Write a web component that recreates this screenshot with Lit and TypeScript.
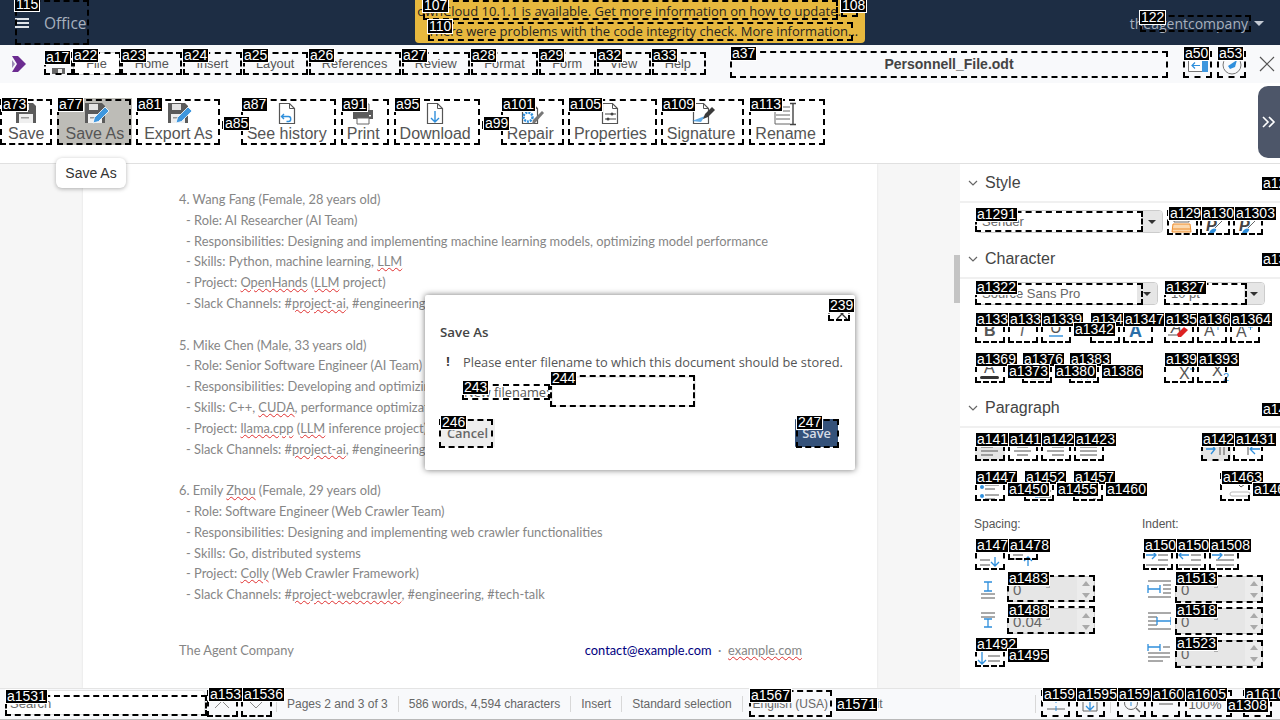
import { LitElement, html, css, svg } from 'lit'
import { customElement } from 'lit/decorators.js'

type Mark = [string, number, number, number?, number?, number?, number?]

// hint overlay: label, label x, label y, box left, top, right, bottom
const MARKS: Mark[] = [
  ['115', 15, -2, 15, 0, 89, 45],
  ['107', 423, -1, 423, 0, 838, 20],
  ['108', 841, -1, 841, 0, 858, 17],
  ['110', 428, 20, 428, 22, 853, 41],
  ['122', 1140, 11, 1140, 15, 1251, 32],
  ['a17', 45, 51, 44, 52, 73, 75],
  ['a22', 73, 49, 73, 52, 121, 75],
  ['a23', 121, 49, 121, 52, 182, 75],
  ['a24', 183, 49, 183, 52, 242, 75],
  ['a25', 243, 49, 243, 52, 308, 75],
  ['a26', 309, 49, 309, 52, 401, 75],
  ['a27', 402, 49, 402, 52, 470, 75],
  ['a28', 471, 49, 471, 52, 538, 75],
  ['a29', 539, 49, 539, 52, 596, 75],
  ['a32', 597, 49, 597, 52, 651, 75],
  ['a33', 652, 49, 652, 52, 706, 75],
  ['a37', 731, 47, 730, 51, 1168, 78],
  ['a50', 1184, 47, 1183, 51, 1212, 78],
  ['a53', 1218, 47, 1217, 51, 1246, 78],
  ['a73', 2, 98, 0, 99, 52, 145],
  ['a77', 58, 98, 57, 99, 131, 145],
  ['a81', 137, 98, 136, 99, 220, 145],
  ['a85', 224, 117, 222, 121, 224, 129],
  ['a87', 242, 98, 241, 99, 336, 145],
  ['a91', 342, 98, 341, 99, 389, 145],
  ['a95', 395, 98, 394, 99, 480, 145],
  ['a99', 484, 117, 482, 121, 484, 129],
  ['a101', 502, 98, 501, 99, 564, 145],
  ['a105', 569, 98, 568, 99, 657, 145],
  ['a109', 662, 98, 661, 99, 744, 145],
  ['a113', 750, 98, 749, 99, 825, 145],
  ['a1287', 1262, 177, 1261, 177, 1281, 190],
  ['a1291', 976, 208, 975, 211, 1143, 232],
  ['a1294', 1169, 207, 1167, 210, 1198, 235],
  ['a1300', 1202, 207, 1200, 210, 1230, 235],
  ['a1303', 1235, 207, 1233, 210, 1263, 235],
  ['a1318', 1262, 253, 1261, 253, 1281, 266],
  ['a1322', 976, 281, 975, 283, 1143, 305],
  ['a1327', 1165, 281, 1164, 283, 1247, 305],
  ['a1334', 976, 313, 975, 315, 1005, 343],
  ['a1337', 1009, 313, 1008, 315, 1038, 343],
  ['a1339', 1042, 313, 1041, 315, 1071, 343],
  ['a1344', 1091, 313, 1090, 315, 1120, 343],
  ['a1342', 1074, 323],
  ['a1347', 1124, 313, 1123, 315, 1153, 343],
  ['a1354', 1165, 313, 1164, 315, 1194, 343],
  ['a1361', 1198, 313, 1197, 315, 1227, 343],
  ['a1364', 1231, 313, 1230, 315, 1260, 343],
  ['a1369', 976, 353, 975, 355, 1005, 383],
  ['a1376', 1023, 353, 1022, 355, 1052, 383],
  ['a1373', 1008, 365],
  ['a1383', 1070, 353, 1069, 355, 1099, 383],
  ['a1380', 1055, 365],
  ['a1386', 1102, 365],
  ['a1390', 1165, 353, 1164, 355, 1194, 383],
  ['a1393', 1198, 353, 1197, 355, 1227, 383],
  ['a1408', 1262, 403, 1261, 403, 1281, 416],
  ['a1414', 976, 433, 975, 435, 1005, 461],
  ['a1417', 1009, 433, 1008, 435, 1038, 461],
  ['a1420', 1042, 433, 1041, 435, 1071, 461],
  ['a1423', 1075, 433, 1074, 435, 1104, 461],
  ['a1428', 1202, 433, 1201, 435, 1230, 461],
  ['a1431', 1235, 433, 1233, 435, 1263, 461],
  ['a1447', 976, 471, 975, 473, 1005, 501],
  ['a1452', 1025, 471, 1024, 473, 1054, 501],
  ['a1450', 1008, 483],
  ['a1457', 1074, 471, 1073, 473, 1103, 501],
  ['a1455', 1057, 483],
  ['a1460', 1106, 483],
  ['a1463', 1222, 471, 1220, 473, 1250, 501],
  ['a1466', 1253, 483],
  ['a1474', 976, 539, 975, 541, 1005, 570],
  ['a1478', 1009, 539, 1008, 541, 1038, 560],
  ['a1502', 1144, 539, 1143, 541, 1173, 570],
  ['a1505', 1177, 539, 1176, 541, 1206, 570],
  ['a1508', 1210, 539, 1209, 541, 1239, 570],
  ['a1483', 1008, 572, 1007, 575, 1095, 602],
  ['a1488', 1008, 604, 1007, 606, 1095, 634],
  ['a1492', 976, 638, 975, 640, 1005, 667],
  ['a1495', 1008, 649],
  ['a1513', 1176, 572, 1175, 575, 1263, 603],
  ['a1518', 1176, 604, 1175, 607, 1263, 635],
  ['a1523', 1176, 637, 1175, 640, 1263, 668],
  ['a1531', 6, 690, 5, 695, 207, 716],
  ['a1533', 209, 688, 207, 690, 238, 717],
  ['a1536', 243, 688, 241, 690, 272, 717],
  ['a1567', 750, 689, 749, 690, 832, 717],
  ['a1571', 836, 698],
  ['a1592', 1043, 688, 1041, 690, 1070, 717],
  ['a1595', 1077, 688, 1076, 690, 1105, 717],
  ['a1598', 1118, 688, 1117, 690, 1146, 717],
  ['a1602', 1152, 688, 1151, 690, 1180, 717],
  ['a1605', 1186, 688, 1185, 690, 1232, 717],
  ['a1610', 1245, 688, 1243, 690, 1272, 717],
  ['a1308', 1227, 699],
  ['239', 829, 299, 828, 300, 850, 321],
  ['243', 463, 381, 462, 384, 550, 400],
  ['244', 551, 372, 550, 375, 695, 407],
  ['246', 441, 416, 439, 419, 493, 448],
  ['247', 797, 416, 796, 419, 839, 448],
]

const MENU = ['File', 'Home', 'Insert', 'Layout', 'References', 'Review', 'Format', 'Form', 'View', 'Help']

const floppy = svg`<path fill="#5b5b5b" d="M4 1h17l3 3v17H4z"/><rect x="8" y="2" width="9" height="6" fill="#e4e4e4"/><rect x="7" y="12" width="14" height="9" fill="#efefef"/><rect x="9" y="15" width="8" height="1.5" fill="#999"/>`
const pencil = svg`<path fill="#3f97de" stroke="#fff" stroke-width=".8" d="M12 21l1.5-5.5L24 5l4 4-10.5 10.5z"/>`
const docOutline = svg`<path fill="#fff" stroke="#555" stroke-width="1.2" d="M6.5 1.5h10l5 5v15h-15z"/><path fill="none" stroke="#555" d="M16.5 1.5v5h5"/>`

const TOOL_ICONS: Record<string, unknown> = {
  save: floppy,
  saveas: svg`${floppy}${pencil}`,
  history: svg`${docOutline}<path fill="none" stroke="#2f8fdc" stroke-width="1.4" d="M11 12l-2.5 2.5L11 17M8.5 14.5h7c3 0 3 5 0 5h-2"/>`,
  print: svg`<path fill="#fff" stroke="#666" d="M8 2h12v7H8z"/><rect x="4" y="8" width="20" height="9" fill="#5b5b5b"/><path fill="#fff" stroke="#666" d="M8 16h12v6H8z"/><rect x="20" y="13" width="2" height="1.4" fill="#fff"/>`,
  download: svg`${docOutline}<path fill="none" stroke="#2f8fdc" stroke-width="1.4" d="M14 9v11M10 16l4 4 4-4"/>`,
  repair: svg`${docOutline}<circle cx="12" cy="15" r="4.5" fill="none" stroke="#2f8fdc" stroke-width="2.5" stroke-dasharray="2 1"/><path fill="#777" d="M16 22l1-4L26 9l2 2-9 10z"/>`,
  properties: svg`${docOutline}<path stroke="#444" stroke-width="1.2" d="M9 12h11M9 17h11"/><circle cx="16" cy="12" r="1.5" fill="#444"/><circle cx="12" cy="17" r="1.5" fill="#444"/>`,
  signature: svg`${docOutline}<path fill="#2f8fdc" opacity=".75" d="M5 19l13-5-4 6z"/><path fill="#3a3a3a" d="M16 17l2-5 7-7 3 3-7 7z"/>`,
  rename: svg`<path fill="none" stroke="#666" d="M4 5h14M4 9h14M4 13h14M4 17h14M3 2v20h15"/><path fill="#fff" stroke="#444" stroke-width="1.4" d="M18 1.5h6M18 22.5h6M21 2v20"/>`,
}

const TOOLS: [string, string, string][] = [
  ['Save', 'save', 'lead'],
  ['Save As', 'saveas', 'on'],
  ['Export As', 'saveas', ''],
  ['See history', 'history', 'sep14'],
  ['Print', 'print', ''],
  ['Download', 'download', ''],
  ['Repair', 'repair', 'sep16'],
  ['Properties', 'properties', ''],
  ['Signature', 'signature', ''],
  ['Rename', 'rename', ''],
]

const lines = (d: string, c = '#555') => svg`<path fill="none" stroke=${c} d=${d}/>`
const arrow = (d: string) => svg`<path fill="none" stroke="#2f8fdc" stroke-width="1.3" d=${d}/>`
const letter = (t: string, x: number, y: number, fill = '#555', weight = '400', style = 'normal', size = 16) =>
  svg`<text x=${x} y=${y} fill=${fill} font-family="Liberation Sans" font-size=${size} font-weight=${weight} font-style=${style}>${t}</text>`

const ICONS: Record<string, unknown> = {
  hl: svg`<path fill="none" stroke="#666" d="M7 6h15v6H7z"/><path fill="#fbd9b0" stroke="#ef8d2b" d="M6 14h17l1 8H5z"/><path stroke="#ef8d2b" d="M6 19h17"/>`,
  brush: svg`${letter('P', 6, 21, '#444', '700', 'italic')}<path fill="none" stroke="#666" d="M15 18L25 8"/><path fill="#2f8fdc" d="M9 23c2-5 6-5 7-4s-2 6-7 4z"/>`,
  b: letter('B', 9, 21, '#555', '700'),
  i: letter('I', 12, 21, '#666', '400', 'italic'),
  u: svg`${letter('U', 9, 18, '#555', '400')}<path stroke="#2f8fdc" stroke-width="1.4" d="M8 21h14"/>`,
  s: svg`${letter('S', 9, 21)}<path stroke="#555" d="M8 16h14"/>`,
  ba: letter('A', 6, 22, '#2a6ea8', '700', 'normal', 18),
  clr: svg`${letter('A', 7, 18, '#555', '400', 'italic')}<path stroke="#555" d="M4 20h10"/><path fill="#dd2222" d="M13 19l7-7 4 3-7 7h-3z"/>`,
  grow: svg`${letter('A', 7, 21)}<path stroke="#2f8fdc" d="M21 12v3"/>`,
  shrink: svg`${letter('A', 6, 22)}<path stroke="#2f8fdc" d="M18 12h5M20.5 10v5"/>`,
  col: svg`${letter('A', 9, 18)}<rect x="5" y="21" width="19" height="3" rx="1.5" fill="#333"/>`,
  bg: svg`<rect x="5" y="21" width="19" height="3" rx="1.5" fill="#fff" stroke="#bbb"/>`,
  blue: svg`<path stroke="#2f8fdc" stroke-dasharray="1 5" d="M6 24h18"/>`,
  sup: svg`${letter('X', 7, 24, '#555', '400')}<path stroke="#2f8fdc" d="M18 14h5"/>`,
  sub: svg`${letter('X', 7, 21, '#555', '400')}${letter('2', 18, 26, '#2f8fdc', '400', 'normal', 11)}`,
  left: lines('M6 9h17M6 13h12M6 17h17M6 21h12'),
  center: lines('M6 9h17M9 13h11M6 17h17M9 21h11'),
  right: lines('M6 9h17M11 13h12M6 17h17M11 21h12'),
  just: lines('M6 9h17M6 13h17M6 17h17M6 21h17'),
  ltr: svg`${arrow('M5 15h9M10 10l4 5-4 5')}<path fill="#333" d="M14 6h6v6z"/>${lines('M19 9v12M23 9v12')}`,
  rtl: svg`<path fill="#333" d="M9 6h6v6z"/>${lines('M14 9v12')}${arrow('M26 15h-9M21 10l-5 5 5 5')}`,
  bullets: svg`<circle cx="7" cy="14" r="2" fill="#2f8fdc"/><circle cx="7" cy="23" r="2" fill="#2f8fdc"/>${lines('M10 12h14M10 16h10M10 22h14M10 26h10')}`,
  nums: svg`${arrow('M8 24h3v-3')}${lines('M12 24h12M12 18h12')}`,
  outl: lines('M14 26h3'),
  para: svg`${arrow('M6 10v2M11 10v2')}${lines('M13 11l3 3 4-3')}<rect x="5" y="19" width="20" height="4" rx="2" fill="#fff" stroke="#bbb"/>`,
  pdec: svg`${lines('M5 19h10M5 24h10')}${arrow('M20 16v9M16 21l4 4 4-4')}`,
  pinc: svg`${lines('M5 10h10M5 14h10M5 18h10')}${arrow('M20 25v-9M16 20l4-4 4 4')}`,
  iinc: svg`${arrow('M3 14h10M9 10l4 4-4 4')}${lines('M15 14h10M15 19h10M3 24h22')}`,
  idec: svg`${arrow('M13 14H3M7 10l-4 4 4 4')}${lines('M15 14h10M15 19h10M3 24h22')}`,
  ifirst: svg`${arrow('M3 14h10M9 10l4 4-4 4')}${lines('M15 14h10M7 19h18M7 24h18')}`,
  sa: svg`${arrow('M9 5h8M13 5v9M9 14h8')}${lines('M6 17h14M6 21h14')}`,
  sb: svg`${lines('M6 4h14M6 8h14')}${arrow('M9 10h8M13 10v8M9 18h8')}`,
  il: svg`${arrow('M5 8v8M5 12h12M17 8v8')}${lines('M20 8h9M20 12h9M20 16h9M5 4h24M5 20h24')}`,
  ir: svg`${lines('M5 8h9M5 12h9M5 16h9M5 4h24M5 20h24')}${arrow('M14 8v8M14 12h14M28 8v8')}`,
  ifl: svg`${arrow('M5 3v7M5 6h12M17 3v7')}${lines('M20 6h7M5 12h22M5 16h22M5 20h15')}`,
  ldown: svg`${arrow('M7 11v13M3 20l4 4 4-4')}${lines('M13 11h12M13 16h12M13 21h12')}`,
}

@customElement('app-root')
export class AppRoot extends LitElement {
  static styles = css`
    :host {
      display: block;
      width: 1280px;
      height: 720px;
      position: relative;
      overflow: hidden;
      font-family: 'Liberation Sans', sans-serif;
      background: #fff;
    }

    .app {
      display: flex;
      flex-direction: column;
      height: 720px;
    }

    /* top navy bar */
    .top {
      height: 45px;
      flex: none;
      background: #1d2d44;
      display: flex;
      align-items: flex-start;
      font-family: 'Open Sans', sans-serif;
      color: #a7b0be;
    }

    .burger {
      width: 14px;
      height: 10px;
      margin: 18px 15px 0 15px;
      border-top: 2px solid #dfe3e8;
      border-bottom: 2px solid #dfe3e8;
      position: relative;
      box-sizing: border-box;
    }

    .burger::after {
      content: '';
      position: absolute;
      left: 0;
      right: 0;
      top: 2px;
      height: 2px;
      background: #dfe3e8;
    }

    .brand {
      font-size: 15.5px;
      line-height: 46px;
      width: 371px;
    }

    .banner {
      width: 450px;
      height: 43px;
      background: #e7b83e;
      border-radius: 0 0 4px 4px;
      color: #26241f;
      font-size: 13px;
      text-align: center;
      line-height: 20px;
      padding-top: 1px;
      box-sizing: border-box;
      white-space: nowrap;
    }

    .banner .first {
      padding-right: 22px;
    }

    .banner .second {
      padding-left: 6px;
    }

    .user {
      margin-left: auto;
      display: flex;
      align-items: center;
      font-size: 14px;
      height: 47px;
      padding-right: 16px;
    }

    .caret {
      width: 0;
      height: 0;
      margin-left: 6px;
      border: 5px solid transparent;
      border-top-color: #c4cad3;
      border-bottom: 0;
    }

    /* menu row */
    .menu {
      height: 38px;
      flex: none;
      background: #f8f9fb;
      display: flex;
      align-items: flex-start;
      color: #555;
      font-size: 12.8px;
    }

    .logo {
      width: 44px;
      height: 38px;
      flex: none;
      display: flex;
      align-items: center;
      justify-content: center;
      padding-right: 6px;
      box-sizing: border-box;
    }

    .sheet {
      width: 29px;
      height: 23px;
      margin-top: 7px;
      flex: none;
      display: flex;
      align-items: flex-end;
      justify-content: center;
    }

    .tabs {
      display: flex;
      margin-top: 7px;
      width: 657px;
      flex: none;
    }

    .tab {
      height: 23px;
      line-height: 24px;
      padding: 0 13.75px;
      box-sizing: border-box;
      text-align: center;
    }

    .tab.on {
      background: #fff;
      border: 1px solid #d8d8d8;
      border-radius: 4px;
      line-height: 22px;
      padding: 0 12px;
      width: 47px;
      margin-right: 1px;
    }

    .title {
      width: 438px;
      height: 27px;
      margin-top: 6px;
      flex: none;
      text-align: center;
      font-size: 14px;
      font-weight: 700;
      color: #444;
      line-height: 27px;
    }

    .win {
      flex: none;
      width: 29px;
      height: 27px;
      margin: 6px 5px 0 15px;
      display: flex;
      align-items: center;
      justify-content: center;
    }

    .win + .win {
      margin: 6px 0 0 0;
    }

    .close {
      margin: 11px 0 0 13px;
    }

    /* toolbar */
    .tools {
      height: 81px;
      flex: none;
      border-bottom: 1px solid #e0e0e0;
      box-sizing: border-box;
      display: flex;
      gap: 4px;
      padding-top: 15px;
    }

    .tool {
      height: 47px;
      padding: 4px 8px 0;
      box-sizing: border-box;
      display: flex;
      flex-direction: column;
      align-items: center;
      font-size: 16px;
      line-height: 18px;
      color: #555;
      white-space: nowrap;
    }

    .tool svg {
      width: 28px;
      height: 24px;
      flex: none;
      margin-bottom: -1px;
    }

    .tool.on {
      background: #bdbcb7;
    }

    .tool.lead {
      margin-right: 1px;
    }

    .tool.sep14 {
      margin-left: 14px;
    }

    .tool.sep16 {
      margin-left: 16px;
    }

    /* body */
    .main {
      flex: 1;
      display: flex;
      min-height: 0;
    }

    .doc {
      width: 960px;
      flex: none;
      background: #f6f6f6;
      overflow: hidden;
      position: relative;
    }

    .page {
      width: 794px;
      height: 100%;
      margin-left: 83px;
      background: #fff;
      box-sizing: border-box;
      padding: 25px 75px 0 96px;
      box-shadow: 0 0 2px #ddd;
      font-family: Lato, sans-serif;
      font-size: 12.85px;
      line-height: 20.8px;
      color: #868686;
      white-space: nowrap;
    }

    .page p {
      margin: 0;
    }

    .page p.sub {
      padding-left: 7px;
    }

    .page p.blank {
      height: 20.8px;
    }

    .sp {
      text-decoration: underline wavy #e03030 1px;
    }

    .foot {
      display: flex;
      justify-content: space-between;
      margin-top: 35px;
    }

    .mail {
      color: #000080;
    }

    .thumb {
      position: absolute;
      right: 0;
      top: 91px;
      width: 6px;
      height: 48px;
      background: #c4c4c4;
    }

    .side {
      width: 320px;
      flex: none;
      background: #fff;
      color: #444;
      overflow: hidden;
    }

    .head {
      height: 39px;
      display: flex;
      align-items: center;
      border-bottom: 2px solid #f0f0f0;
      box-sizing: border-box;
      font-size: 16px;
      padding: 1px 0 0 8px;
      gap: 7px;
    }

    .row {
      display: flex;
      padding-left: 15px;
    }

    .ib {
      width: 30px;
      height: 28px;
      flex: none;
      margin-right: 3px;
      display: flex;
      align-items: center;
      justify-content: center;
      border-radius: 3px;
    }

    .ib.on {
      background: #e6e6e6;
    }

    .ib svg {
      width: 30px;
      height: 28px;
    }

    .short .ib {
      height: 26px;
    }

    .sel {
      height: 23px;
      border: 1px solid #ccc;
      border-radius: 4px;
      background: #fff;
      box-sizing: border-box;
      display: flex;
      justify-content: space-between;
      font-size: 13px;
      line-height: 22px;
      padding-left: 6px;
      color: #666;
      overflow: hidden;
      flex: none;
    }

    .sel i {
      width: 20px;
      flex: none;
      background: #e6e6e6;
      display: flex;
      align-items: center;
      justify-content: center;
    }

    .sel i::after {
      content: '';
      border: 4px solid transparent;
      border-top-color: #333;
      border-bottom: 0;
    }

    .w188 { width: 188px; }
    .w183 { width: 183px; }
    .w101 { width: 101px; }
    .m6 { margin-left: 6px; }

    .pad7 { padding-top: 7px; }
    .pad3 { padding-top: 3px; }
    .pad10 { padding-top: 10px; }
    .pad12 { padding-top: 12px; }
    .low2 { margin-bottom: 2px; }
    .low6 { margin-bottom: 6px; }

    .g4 { margin-right: 4px; }
    .g8 { margin-right: 11px; }
    .g16 { margin-right: 19px; }
    .g17 { margin-right: 20px; }
    .g19 { margin-right: 22px; }
    .g64 { margin-right: 67px; }
    .g100 { margin-right: 97px; }
    .g117 { margin-right: 116px; }

    .cap {
      display: flex;
      font-size: 12px;
      padding: 16px 0 0 14px;
      height: 15px;
      line-height: 15px;
      color: #555;
    }

    .cap span {
      width: 168px;
      flex: none;
    }

    .grid {
      display: grid;
      grid-template-columns: 168px 152px;
      padding: 9px 0 0 15px;
    }

    .col {
      display: flex;
      flex-direction: column;
      gap: 6px;
    }

    .btns {
      display: flex;
      height: 29px;
    }

    .sr {
      display: flex;
      align-items: center;
      height: 26px;
    }

    .sr svg {
      width: 28px;
      height: 24px;
      flex: none;
      margin-right: 4px;
    }

    .spin {
      width: 88px;
      height: 26px;
      background: #e6e6e6;
      border: 1px solid #ccc;
      box-sizing: border-box;
      border-radius: 2px;
      display: flex;
      justify-content: space-between;
      align-items: center;
      font-size: 15px;
      color: #666;
      padding-left: 5px;
      position: relative;
    }

    .spin::before {
      content: '';
      position: absolute;
      left: 38px;
      top: 7px;
      width: 3px;
      height: 3px;
      border-right: 1px solid #aaa;
      border-bottom: 1px solid #aaa;
    }

    .spin b {
      width: 17px;
      height: 24px;
      background: #ececec;
      display: flex;
      flex-direction: column;
      align-items: center;
      justify-content: center;
      gap: 7px;
    }

    .spin b::before,
    .spin b::after {
      content: '';
      border: 4px solid transparent;
    }

    .spin b::before {
      border-bottom: 5px solid #aaa;
      border-top: 0;
    }

    .spin b::after {
      border-top: 5px solid #aaa;
      border-bottom: 0;
    }

    /* status bar */
    .status {
      height: 32px;
      flex: none;
      background: #f8f9fb;
      border-top: 1px solid #e4e4e4;
      border-bottom: 1px solid #b9b9b9;
      box-sizing: border-box;
      display: flex;
      align-items: center;
      font-size: 12px;
      color: #666;
    }

    .search {
      width: 200px;
      height: 25px;
      margin: -3px 0 0 5px;
      flex: none;
      background: #fff;
      border: 1px solid #e4e4e4;
      border-radius: 3px;
      box-sizing: border-box;
      padding-left: 4px;
      font-size: 13px;
      line-height: 26px;
      color: #666;
    }

    .nav {
      width: 34px;
      flex: none;
      display: flex;
      justify-content: center;
    }

    .seg {
      padding: 0 10px;
      border-left: 1px solid #d8d8d8;
      line-height: 16px;
      white-space: nowrap;
    }

    .seg.first {
      margin-left: 3px;
    }

    .lang {
      width: 107px;
      flex: none;
      box-sizing: border-box;
    }

    .edit {
      width: 34px;
      flex: none;
      text-align: right;
      white-space: nowrap;
    }

    .sb-icons {
      display: flex;
      height: 18px;
      border-left: 1px solid #d8d8d8;
      align-items: center;
      margin-left: auto;
      padding: 0 13px 0 3px;
    }

    .sb-icons svg {
      width: 34px;
      height: 18px;
      flex: none;
    }

    .sb-icons i {
      width: 1px;
      height: 18px;
      margin: 0 4px 0 3px;
      background: #d8d8d8;
    }

    .pct {
      width: 50px;
      text-align: center;
      font-size: 13px;
      padding-right: 6px;
      box-sizing: border-box;
    }

    /* floating things */
    .tip {
      position: absolute;
      left: 56px;
      top: 158px;
      width: 70px;
      height: 30px;
      background: #fff;
      border-radius: 6px;
      box-shadow: 0 1px 4px rgba(0, 0, 0, 0.3);
      text-align: center;
      font-size: 14px;
      line-height: 30px;
      color: #333;
    }

    .handle {
      position: absolute;
      left: 1258px;
      top: 86px;
      width: 22px;
      height: 72px;
      background: #4d5669;
      border-radius: 10px 0 0 10px;
      color: #fff;
      display: flex;
      align-items: center;
      justify-content: center;
    }

    .dialog {
      position: absolute;
      left: 425px;
      top: 295px;
      width: 430px;
      height: 175px;
      box-sizing: border-box;
      background: #fff;
      border-radius: 2px;
      box-shadow: 0 0 6px rgba(0, 0, 0, 0.55);
      padding: 28px 17px 0 15px;
      font-family: 'Open Sans', sans-serif;
      color: #555;
      font-size: 12.8px;
    }

    .dialog h2 {
      margin: 0;
      font-size: 13.3px;
      font-weight: 600;
      line-height: 18px;
      color: #444;
    }

    .msg {
      display: flex;
      margin-top: 12px;
      line-height: 18px;
      white-space: nowrap;
    }

    .msg b {
      width: 23px;
      flex: none;
      text-align: center;
      font-size: 12px;
      color: #333;
      padding-right: 7px;
      box-sizing: border-box;
    }

    .fn {
      display: flex;
      align-items: center;
      padding-left: 24px;
      height: 31px;
      margin-top: 5px;
    }

    .fn span {
      width: 87px;
      flex: none;
    }

    .input {
      width: 145px;
      height: 31px;
      border: 2px solid #eee;
      box-sizing: border-box;
    }

    .acts {
      display: flex;
      justify-content: space-between;
      margin-top: 12px;
    }

    .btn {
      height: 28px;
      line-height: 29px;
      background: #eee;
      font-weight: 600;
      padding: 0 7px;
      border-radius: 1px;
      color: #666;
    }

    .btn.pri {
      background: #35527a;
      color: #d7dde6;
      padding: 0 7px;
    }

    .x {
      position: absolute;
      right: 7px;
      top: 13px;
    }

    /* hint overlay */
    .box {
      position: absolute;
      border: 2px dashed #000;
      box-sizing: border-box;
    }

    .tag {
      position: absolute;
      background: #000;
      color: #fff;
      font: 14px/13px 'Liberation Sans', sans-serif;
      padding: 0 1px;
      outline: 1px solid #fff;
      height: 13px;
      white-space: nowrap;
    }
  `

  private icon(name: string, cls = '') {
    return html`<div class="ib ${cls}">
      <svg viewBox="0 0 30 28">${ICONS[name]}</svg>
    </div>`
  }

  private chevron() {
    return html`<svg width="10" height="7" viewBox="0 0 10 7">
      <path fill="none" stroke="#666" stroke-width="1.2" d="M1 1l4 4 4-4" />
    </svg>`
  }

  private spinRow(icon: string, value: string) {
    return html`<div class="sr">
      <svg viewBox="0 0 28 24">${ICONS[icon]}</svg>
      <div class="spin">${value}<b></b></div>
    </div>`
  }

  render() {
    return html`
      <div class="app">
        <div class="top">
          <div class="burger"></div>
          <div class="brand">Office</div>
          <div class="banner">
            <div class="first">ownCloud 10.1.1 is available. Get more information on how to update.</div>
            <div class="second">There were problems with the code integrity check. More information…</div>
          </div>
          <div class="user">theagentcompany<span class="caret"></span></div>
        </div>

        <div class="menu">
          <div class="logo">
            <svg width="14" height="16" viewBox="0 0 14 16">
              <path fill="#6c2c91" d="M0 0h6l8 8-8 8H0l5-8z" />
              <path fill="#9b8bb5" d="M0 4l3 4-3 4z" />
            </svg>
          </div>
          <div class="sheet">
            <svg width="16" height="8" viewBox="0 0 16 8">
              <rect x="1" y="1" width="13" height="6" fill="#666" />
              <rect x="7" y="2" width="4" height="4" fill="#eee" />
            </svg>
          </div>
          <div class="tabs">
            ${MENU.map((m, i) => html`<div class="tab ${i === 0 ? 'on' : ''}">${m}</div>`)}
          </div>
          <div class="title">Personnell_File.odt</div>
          <div class="win">
            <svg width="22" height="14" viewBox="0 0 22 14">
              <path fill="#fff" stroke="#777" d="M1.5 1.5h19v12h-19z" />
              <rect x="15" y="1" width="6" height="13" fill="#3f97de" />
              <path fill="none" stroke="#2f8fdc" stroke-width="1.2" d="M13 7.5H5M8 4.5l-3 3 3 3" />
            </svg>
          </div>
          <div class="win">
            <svg width="22" height="20" viewBox="0 0 22 20">
              <circle cx="11" cy="10" r="9" fill="none" stroke="#777" />
              <path fill="#2f8fdc" d="M16 5l-2 7-5 2-2-3z" />
            </svg>
          </div>
          <svg class="close" width="16" height="16" viewBox="0 0 16 16">
            <path fill="none" stroke="#555" stroke-width="1.2" d="M1 1l14 14M15 1L1 15" />
          </svg>
        </div>

        <div class="tools">
          ${TOOLS.map(
            ([label, ic, cls]) => html`<div class="tool ${cls}">
              <svg viewBox="0 0 28 24">${TOOL_ICONS[ic]}</svg>
              <span>${label}</span>
            </div>`,
          )}
        </div>

        <div class="main">
          <div class="doc">
            <div class="page">
              <p>4. Wang Fang (Female, 28 years old)</p>
              <p class="sub">- Role: AI Researcher (AI Team)</p>
              <p class="sub">- Responsibilities: Designing and implementing machine learning models, optimizing model performance</p>
              <p class="sub">- Skills: Python, machine learning, <span class="sp">LLM</span></p>
              <p class="sub">- Project: <span class="sp">OpenHands</span> (<span class="sp">LLM</span> project)</p>
              <p class="sub">- Slack Channels: #<span class="sp">project-ai</span>, #engineering, #tech-talk</p>
              <p class="blank"></p>
              <p>5. Mike Chen (Male, 33 years old)</p>
              <p class="sub">- Role: Senior Software Engineer (AI Team)</p>
              <p class="sub">- Responsibilities: Developing and optimizing LLM inference engines</p>
              <p class="sub">- Skills: C++, <span class="sp">CUDA</span>, performance optimization</p>
              <p class="sub">- Project: <span class="sp">llama.cpp</span> (<span class="sp">LLM</span> inference project)</p>
              <p class="sub">- Slack Channels: #<span class="sp">project-ai</span>, #engineering, #tech-talk</p>
              <p class="blank"></p>
              <p>6. Emily <span class="sp">Zhou</span> (Female, 29 years old)</p>
              <p class="sub">- Role: Software Engineer (Web Crawler Team)</p>
              <p class="sub">- Responsibilities: Designing and implementing web crawler functionalities</p>
              <p class="sub">- Skills: Go, distributed systems</p>
              <p class="sub">- Project: <span class="sp">Colly</span> (Web Crawler Framework)</p>
              <p class="sub">- Slack Channels: #<span class="sp">project-webcrawler</span>, #engineering, #tech-talk</p>
              <div class="foot">
                <span>The Agent Company</span>
                <span><span class="mail">contact@example.com</span> &nbsp;·&nbsp; <span class="sp">example.com</span></span>
              </div>
            </div>
            <div class="thumb"></div>
          </div>

          <div class="side">
            <div class="head">${this.chevron()}Style</div>
            <div class="row pad7 low2">
              <div class="sel w188 g4">Sender<i></i></div>
              ${this.icon('hl')}${this.icon('brush')}${this.icon('brush')}
            </div>

            <div class="head">${this.chevron()}Character</div>
            <div class="row pad3">
              <div class="sel w183">Source Sans Pro<i></i></div>
              <div class="sel w101 m6">10 pt<i></i></div>
            </div>
            <div class="row pad10">
              ${this.icon('b')}${this.icon('i')}${this.icon('u', 'g16')}
              ${this.icon('s')}${this.icon('ba', 'g8')}
              ${this.icon('clr')}${this.icon('grow')}${this.icon('shrink')}
            </div>
            <div class="row pad12 low6">
              ${this.icon('col', 'g17')}${this.icon('bg', 'g17')}${this.icon('blue', 'g64')}
              ${this.icon('sup')}${this.icon('sub')}
            </div>

            <div class="head">${this.chevron()}Paragraph</div>
            <div class="row pad7 short">
              ${this.icon('left', 'on')}${this.icon('center')}${this.icon('right')}${this.icon('just', 'g100')}
              ${this.icon('ltr', 'on')}${this.icon('rtl')}
            </div>
            <div class="row pad12">
              ${this.icon('bullets', 'g19')}${this.icon('nums', 'g19')}${this.icon('outl', 'g117')}
              ${this.icon('para')}
            </div>

            <div class="cap"><span>Spacing:</span><span>Indent:</span></div>

            <div class="grid">
              <div class="col">
                <div class="btns">${this.icon('pdec')}${this.icon('pinc')}</div>
                ${this.spinRow('sa', '0')}${this.spinRow('sb', '0.04')}
                <div class="btns">${this.icon('ldown')}</div>
              </div>
              <div class="col">
                <div class="btns">${this.icon('iinc')}${this.icon('idec')}${this.icon('ifirst')}</div>
                ${this.spinRow('il', '0')}${this.spinRow('ir', '0')}${this.spinRow('ifl', '0')}
              </div>
            </div>
          </div>
        </div>

        <div class="status">
          <div class="search">Search</div>
          <div class="nav">
            <svg width="16" height="9" viewBox="0 0 16 9"><path fill="none" stroke="#888" d="M1 8l7-7 7 7" /></svg>
          </div>
          <div class="nav">
            <svg width="16" height="9" viewBox="0 0 16 9"><path fill="none" stroke="#888" d="M1 1l7 7 7-7" /></svg>
          </div>
          <div class="seg first">Pages 2 and 3 of 3</div>
          <div class="seg">586 words, 4,594 characters</div>
          <div class="seg">Insert</div>
          <div class="seg">Standard selection</div>
          <div class="seg lang">English (USA)</div>
          <div class="edit">Edit</div>
          <div class="sb-icons">
            <svg viewBox="0 0 34 18">${lines('M8 5h18M8 14h18', '#666')}<path stroke="#2f8fdc" d="M17 3v5M17 11v5" /></svg>
            <svg viewBox="0 0 34 18">${lines('M10 5v11h14V5', '#666')}${arrow('M17 3v12M13 11l4 4 4-4')}</svg>
            <i></i>
            <svg viewBox="0 0 34 18"><circle cx="16" cy="8" r="6.5" fill="none" stroke="#666" /><path stroke="#2f8fdc" d="M16 5v6" /><path stroke="#666" stroke-width="1.5" d="M21 13l4 4" /></svg>
            <svg viewBox="0 0 34 18">${lines('M10 9h14', '#555')}</svg>
            <div class="pct">100%</div>
            <svg viewBox="0 0 34 18">${lines('M10 9h14M17 2v14', '#555')}</svg>
          </div>
        </div>
      </div>

      <div class="tip">Save As</div>
      <div class="handle">
        <svg width="14" height="12" viewBox="0 0 14 12">
          <path fill="none" stroke="#fff" stroke-width="1.6" d="M1 1l5 5-5 5M7 1l5 5-5 5" />
        </svg>
      </div>

      <div class="dialog">
        <svg class="x" width="12" height="12" viewBox="0 0 12 12">
          <path fill="none" stroke="#333" stroke-width="1.4" d="M1 1l10 10M11 1L1 11" />
        </svg>
        <h2>Save As</h2>
        <div class="msg"><b>!</b>Please enter filename to which this document should be stored.</div>
        <div class="fn"><span>New filename:</span><div class="input"></div></div>
        <div class="acts">
          <div class="btn">Cancel</div>
          <div class="btn pri">Save</div>
        </div>
      </div>

      ${MARKS.map(([, , , x1, y1, x2, y2]) =>
        x1 === undefined
          ? ''
          : html`<div
              class="box"
              style="left:${x1}px;top:${y1}px;width:${(x2 as number) - x1}px;height:${(y2 as number) - (y1 as number)}px"
            ></div>`,
      )}
      ${MARKS.map(
        ([t, lx, ly]) => html`<div class="tag" style="left:${lx}px;top:${ly}px">${t}</div>`,
      )}
    `
  }
}
